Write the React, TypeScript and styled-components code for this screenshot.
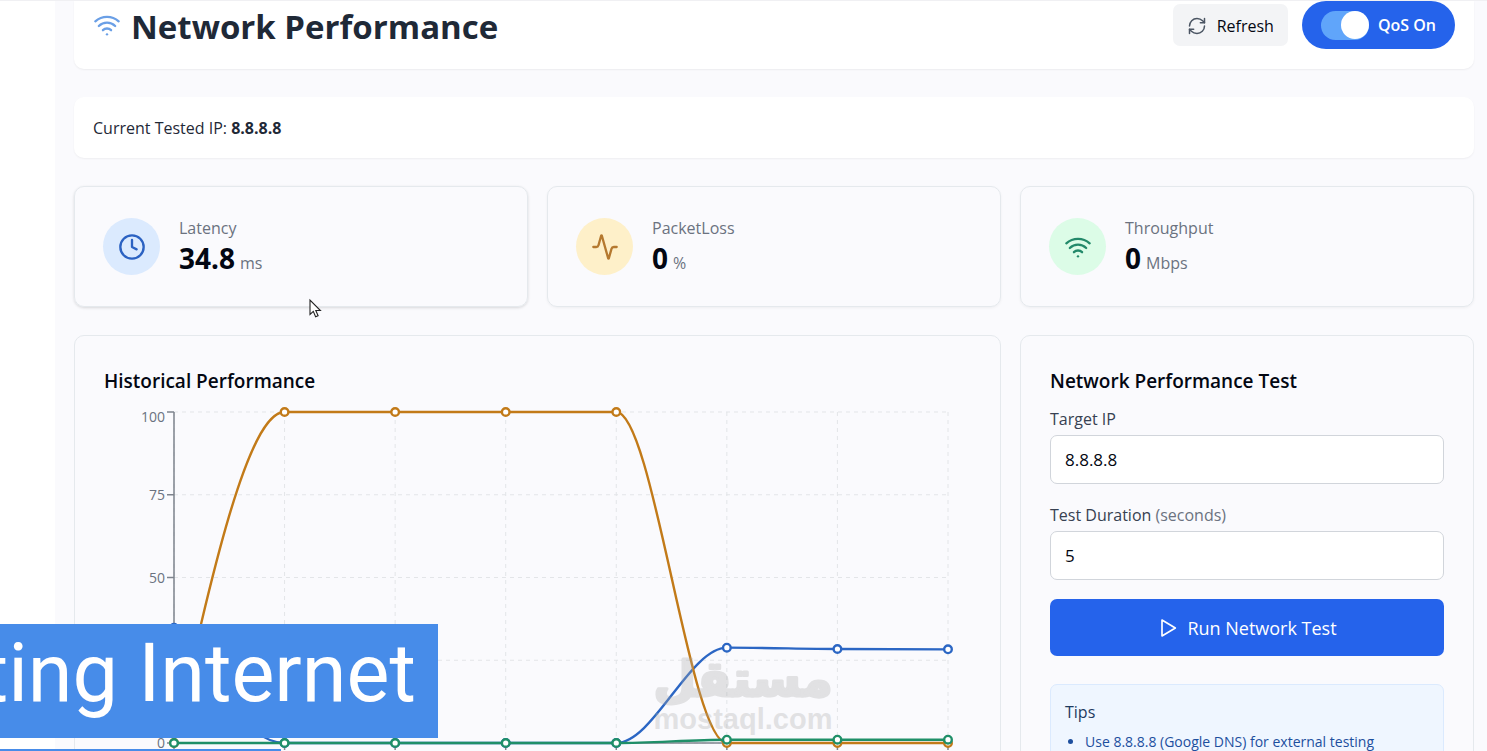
import React, { useState } from "react";
import styled, { createGlobalStyle } from "styled-components";
import { Activity, Clock, RefreshCw, Wifi } from "lucide-react";

const GlobalStyle = createGlobalStyle`
  *, *::before, *::after { box-sizing: border-box; }
  body {
    margin: 0;
    background: #fafafd;
    color: #030712;
    font-family: "Open Sans", "Noto Sans", sans-serif;
    font-size: 16px;
    line-height: 24px;
  }
  h1, h2, h3, p, ul { margin: 0; }
  button, input { font: inherit; color: inherit; }
`;

const Shell = styled.div`
  position: relative;
  display: flex;
  height: 100vh;
  overflow: hidden;
  border-top: 1px solid #f0f0f3;
`;

const Sidebar = styled.aside`
  flex: 0 0 55px;
  background: #ffffff;
`;

const Main = styled.main`
  flex: 1;
  min-width: 0;
  display: flex;
  flex-direction: column;
  gap: 28px;
  padding: 0 13px 28px 19px;
`;

const Header = styled.header`
  display: flex;
  flex: none;
  justify-content: space-between;
  align-items: flex-start;
  padding: 0 19px 20px;
  background: #ffffff;
  border-radius: 0 0 10px 10px;
  box-shadow: 0 1px 2px rgba(0, 0, 0, 0.06);
`;

const TitleRow = styled.div`
  display: flex;
  align-items: center;
  gap: 10px;
  height: 48px;
`;

const Title = styled.h1`
  padding-top: 4px;
  font-size: 33px;
  line-height: 48px;
  font-weight: 700;
  color: #1f2937;
`;

const Actions = styled.div`
  display: flex;
  align-items: center;
  gap: 14px;
`;

const RefreshButton = styled.button`
  display: flex;
  align-items: center;
  gap: 10px;
  height: 42px;
  padding: 2px 14px 0;
  border: 0;
  border-radius: 7px;
  background: #f3f4f6;
  font-size: 16px;
  font-weight: 500;
`;

const SwitchPill = styled.label`
  display: flex;
  align-items: center;
  gap: 9px;
  height: 48px;
  padding: 0 19px;
  border-radius: 24px;
  background: #2563eb;
  color: #ffffff;
  font-size: 16px;
  font-weight: 600;
`;

const Switch = styled.input`
  appearance: none;
  display: flex;
  align-items: center;
  width: 48px;
  height: 29px;
  margin: 0;
  border-radius: 15px;
  background: #60a5fa;
  &::before {
    content: "";
    width: 28px;
    height: 28px;
    border-radius: 50%;
    background: #ffffff;
  }
  &:checked::before { margin-left: auto; }
`;

const IpBar = styled.section`
  flex: none;
  padding: 19px 19px 18px;
  border-radius: 10px;
  background: #ffffff;
  box-shadow: 0 1px 2px rgba(0, 0, 0, 0.05);
  color: #1f2937;
  font-weight: 500;
`;

const Columns = styled.div`
  display: grid;
  flex: none;
  grid-template-columns: repeat(3, minmax(0, 1fr));
  gap: 28px 19px;
`;

const Card = styled.section<{ $wide?: boolean }>`
  grid-column: span ${(p) => (p.$wide ? 2 : 1)};
  padding: 29px;
  border: 1px solid #e5e9ed;
  border-radius: 10px;
`;

const StatCard = styled(Card)<{ $raised?: boolean }>`
  display: flex;
  align-items: center;
  gap: 19px;
  height: 121px;
  padding: 0 28px;
  box-shadow: 0 1px 3px rgba(0, 0, 0, ${(p) => (p.$raised ? 0.14 : 0.05)});
`;

const IconDisc = styled.span<{ $bg: string; $fg: string }>`
  display: grid;
  place-items: center;
  width: 57px;
  height: 57px;
  border-radius: 50%;
  background: ${(p) => p.$bg};
  color: ${(p) => p.$fg};
`;

const StatText = styled.div`
  padding-top: 4px;
`;

const StatLabel = styled.p`
  color: #6b7280;
  font-weight: 500;
`;

const StatValue = styled.p`
  font-family: "Noto Sans", sans-serif;
  font-size: 28px;
  font-weight: 700;
  line-height: 36px;
`;

const Unit = styled.span`
  margin-left: 5px;
  font-family: "Open Sans", sans-serif;
  color: #6b7280;
  font-size: 16px;
  font-weight: 400;
`;

const CardTitle = styled.h2`
  font-size: 19px;
  line-height: 32px;
  font-weight: 600;
`;

const Chart = styled.svg`
  display: block;
  width: 100%;
  overflow: visible;
`;

const Field = styled.div`
  display: flex;
  flex-direction: column;
  gap: 4px;
  margin-bottom: 19px;
`;

const Form = styled.form`
  display: flex;
  flex-direction: column;
  padding-top: 10px;
`;

const FieldLabel = styled.label`
  color: #374151;
  font-weight: 500;
`;

const Muted = styled.span`
  color: #6b7280;
`;

const TextInput = styled.input`
  width: 100%;
  height: 49px;
  padding: 0 14px;
  border: 1px solid #d1d5db;
  border-radius: 7px;
  background: #ffffff;
  font-size: 17px;
`;

const RunButton = styled.button`
  display: flex;
  align-items: center;
  justify-content: center;
  gap: 10px;
  height: 57px;
  border: 0;
  border-radius: 7px;
  background: #2563eb;
  color: #ffffff;
  font-size: 18px;
  font-weight: 500;
`;

const Tips = styled.div`
  margin-top: 28px;
  padding: 14px;
  border: 1px solid #dbeafe;
  border-radius: 7px;
  background: #eff6ff;
`;

const TipsTitle = styled.h3`
  color: #1e3a5f;
  font-size: 16px;
  font-weight: 500;
  line-height: 26px;
`;

const TipsList = styled.ul`
  padding: 5px 0 0 20px;
  color: #1d4f9e;
  font-size: 14px;
`;

const Caption = styled.div`
  position: absolute;
  left: 0;
  bottom: 13px;
  display: flex;
  justify-content: flex-end;
  width: 438px;
  height: 114px;
  padding-right: 22px;
  overflow: hidden;
  background: #478ce9;
  color: #ffffff;
  font-family: Roboto, sans-serif;
  font-size: 81px;
  font-weight: 400;
  line-height: 100px;
  white-space: nowrap;
`;

const CaptionEdge = styled.div`
  position: absolute;
  left: 0;
  bottom: 0;
  width: 281px;
  height: 2px;
  background: #478ce9;
`;

const Watermark = styled.svg`
  position: absolute;
  left: 650px;
  bottom: 10px;
  opacity: 0.3;
`;

const Pointer = styled.svg`
  position: absolute;
  left: 308px;
  top: 297px;
`;

type Series = { name: string; color: string; values: number[] };

const series: Series[] = [
  { name: "latency", color: "#2b66c4", values: [34.8, 0, 0, 0, 0, 28.8, 28.4, 28.3] },
  { name: "packetLoss", color: "#c27a18", values: [0, 100, 100, 100, 100, 0, 0, 0] },
  { name: "throughput", color: "#1f8f68", values: [0, 0, 0, 0, 0, 1, 1, 1] },
];

const LEFT = 70;
const TOP = 15;
const HEIGHT = 331;
const STEP = 110.57;
const px = (i: number) => LEFT + i * STEP;
const py = (v: number) => TOP + HEIGHT * (1 - v / 100);

/* Monotone cubic interpolation through the samples. */
function curve(values: number[]) {
  const n = values.length;
  const ys = values.map(py);
  const s = ys.slice(1).map((y, i) => (y - ys[i]) / STEP);
  const m = ys.map((_, i) => {
    if (i === 0 || i === n - 1) return 0;
    const a = s[i - 1];
    const b = s[i];
    if (a * b <= 0) return 0;
    return Math.sign(a) * Math.min(Math.abs(a), Math.abs(b), Math.abs(a + b) / 4) * 2;
  });
  m[0] = (3 * s[0] - m[1]) / 2;
  m[n - 1] = (3 * s[n - 2] - m[n - 2]) / 2;
  const d = STEP / 3;
  let path = `M${px(0)},${ys[0]}`;
  for (let i = 1; i < n; i++) {
    path += `C${px(i - 1) + d},${ys[i - 1] + m[i - 1] * d} ${px(i) - d},${ys[i] - m[i] * d} ${px(i)},${ys[i]}`;
  }
  return path;
}

function HistoryChart() {
  const cols = [0, 1, 2, 3, 4, 5, 6, 7];
  const ticks = [0, 25, 50, 75, 100];
  const labelled = [0, 50, 75, 100];
  const right = px(7);
  return (
    <Chart viewBox="0 0 867 384" role="img" aria-label="Historical performance chart">
      <g stroke="#e3e5e8" strokeDasharray="4 4">
        {ticks.map((t) => (
          <line key={t} x1={LEFT} x2={right} y1={py(t)} y2={py(t)} />
        ))}
        {cols.map((c) => (
          <line key={c} x1={px(c)} x2={px(c)} y1={TOP} y2={TOP + HEIGHT} />
        ))}
      </g>
      <g stroke="#7d838c" strokeWidth="1.5">
        <line x1={LEFT} x2={LEFT} y1={TOP} y2={TOP + HEIGHT} />
        <line x1={LEFT} x2={right} y1={TOP + HEIGHT} y2={TOP + HEIGHT} />
        {ticks.map((t) => (
          <line key={t} x1={LEFT - 7} x2={LEFT} y1={py(t)} y2={py(t)} />
        ))}
        {cols.map((c) => (
          <line key={c} x1={px(c)} x2={px(c)} y1={TOP + HEIGHT} y2={TOP + HEIGHT + 7} />
        ))}
      </g>
      <g fill="#6b7280" fontSize="14" textAnchor="end">
        {labelled.map((t) => (
          <text key={t} x={LEFT - 9} y={py(t) + (t === 100 ? 10 : 5)}>
            {t}
          </text>
        ))}
      </g>
      {series.map((s) => (
        <g key={s.name} stroke={s.color} strokeWidth="2.4">
          <path d={curve(s.values)} fill="none" />
          {s.values.map((v, i) => (
            <circle key={i} cx={px(i)} cy={py(v)} r="3.8" fill="#ffffff" />
          ))}
        </g>
      ))}
    </Chart>
  );
}

const stats = [
  { label: "Latency", value: "34.8", unit: "ms", icon: Clock, bg: "#dbeafe", fg: "#2b62c2", raised: true },
  { label: "PacketLoss", value: "0", unit: "%", icon: Activity, bg: "#fef0c9", fg: "#b5792f", raised: false },
  { label: "Throughput", value: "0", unit: "Mbps", icon: Wifi, bg: "#dcfce7", fg: "#23896a", raised: false },
];

export default function App() {
  const [qos, setQos] = useState(true);
  const [ip, setIp] = useState("8.8.8.8");
  const [duration, setDuration] = useState("5");

  return (
    <>
      <GlobalStyle />
      <Shell>
        <Sidebar />
        <Main>
          <Header>
            <TitleRow>
              <Wifi size={28} color="#6a9fe6" />
              <Title>Network Performance</Title>
            </TitleRow>
            <Actions>
              <RefreshButton type="button">
                <RefreshCw size={20} color="#4b5563" strokeWidth={1.8} />
                Refresh
              </RefreshButton>
              <SwitchPill>
                <Switch type="checkbox" role="switch" checked={qos} onChange={(e) => setQos(e.target.checked)} />
                {qos ? "QoS On" : "QoS Off"}
              </SwitchPill>
            </Actions>
          </Header>

          <IpBar>
            Current Tested IP: <strong>8.8.8.8</strong>
          </IpBar>

          <Columns>
            {stats.map(({ label, value, unit, icon: Icon, bg, fg, raised }) => (
              <StatCard key={label} $raised={raised}>
                <IconDisc $bg={bg} $fg={fg}>
                  <Icon size={28} />
                </IconDisc>
                <StatText>
                  <StatLabel>{label}</StatLabel>
                  <StatValue>
                    {value}
                    <Unit>{unit}</Unit>
                  </StatValue>
                </StatText>
              </StatCard>
            ))}

            <Card $wide>
              <CardTitle>Historical Performance</CardTitle>
              <HistoryChart />
            </Card>

            <Card>
              <CardTitle>Network Performance Test</CardTitle>
              <Form onSubmit={(e) => e.preventDefault()}>
                <Field>
                  <FieldLabel htmlFor="target">Target IP</FieldLabel>
                  <TextInput id="target" value={ip} onChange={(e) => setIp(e.target.value)} />
                </Field>
                <Field>
                  <FieldLabel htmlFor="duration">
                    Test Duration <Muted>(seconds)</Muted>
                  </FieldLabel>
                  <TextInput id="duration" value={duration} onChange={(e) => setDuration(e.target.value)} />
                </Field>
                <RunButton type="submit">
                  <svg width="20" height="20" viewBox="0 0 24 24" fill="none" stroke="currentColor" strokeWidth="2" strokeLinejoin="round">
                    <path d="M6 2.5 22 12 6 21.5Z" />
                  </svg>
                  Run Network Test
                </RunButton>
              </Form>
              <Tips>
                <TipsTitle>Tips</TipsTitle>
                <TipsList>
                  <li>Use 8.8.8.8 (Google DNS) for external testing</li>
                </TipsList>
              </Tips>
            </Card>
          </Columns>
        </Main>

        <Watermark width="186" height="92" viewBox="0 0 186 92" fill="#a8a8a8" textAnchor="middle" fontWeight="700">
          <text
            x="93"
            y="47"
            direction="rtl"
            fontFamily="DejaVu Sans, sans-serif"
            fontSize="49"
            stroke="#a8a8a8"
            strokeWidth="3"
            strokeLinejoin="round"
          >
            مستقل
          </text>
          <text x="93" y="80" fontFamily="Liberation Sans, sans-serif" fontSize="29">
            mostaql.com
          </text>
        </Watermark>
        <Caption>ting Internet</Caption>
        <CaptionEdge />
        <Pointer width="15" height="22" viewBox="0 0 15 22">
          <path
            d="M2 2v14.5l3.3-3.1 2.3 5.4 2.5-1.1-2.3-5.2h4.6z"
            fill="#ffffff"
            stroke="#222222"
            strokeWidth="1.1"
          />
        </Pointer>
      </Shell>
    </>
  );
}
